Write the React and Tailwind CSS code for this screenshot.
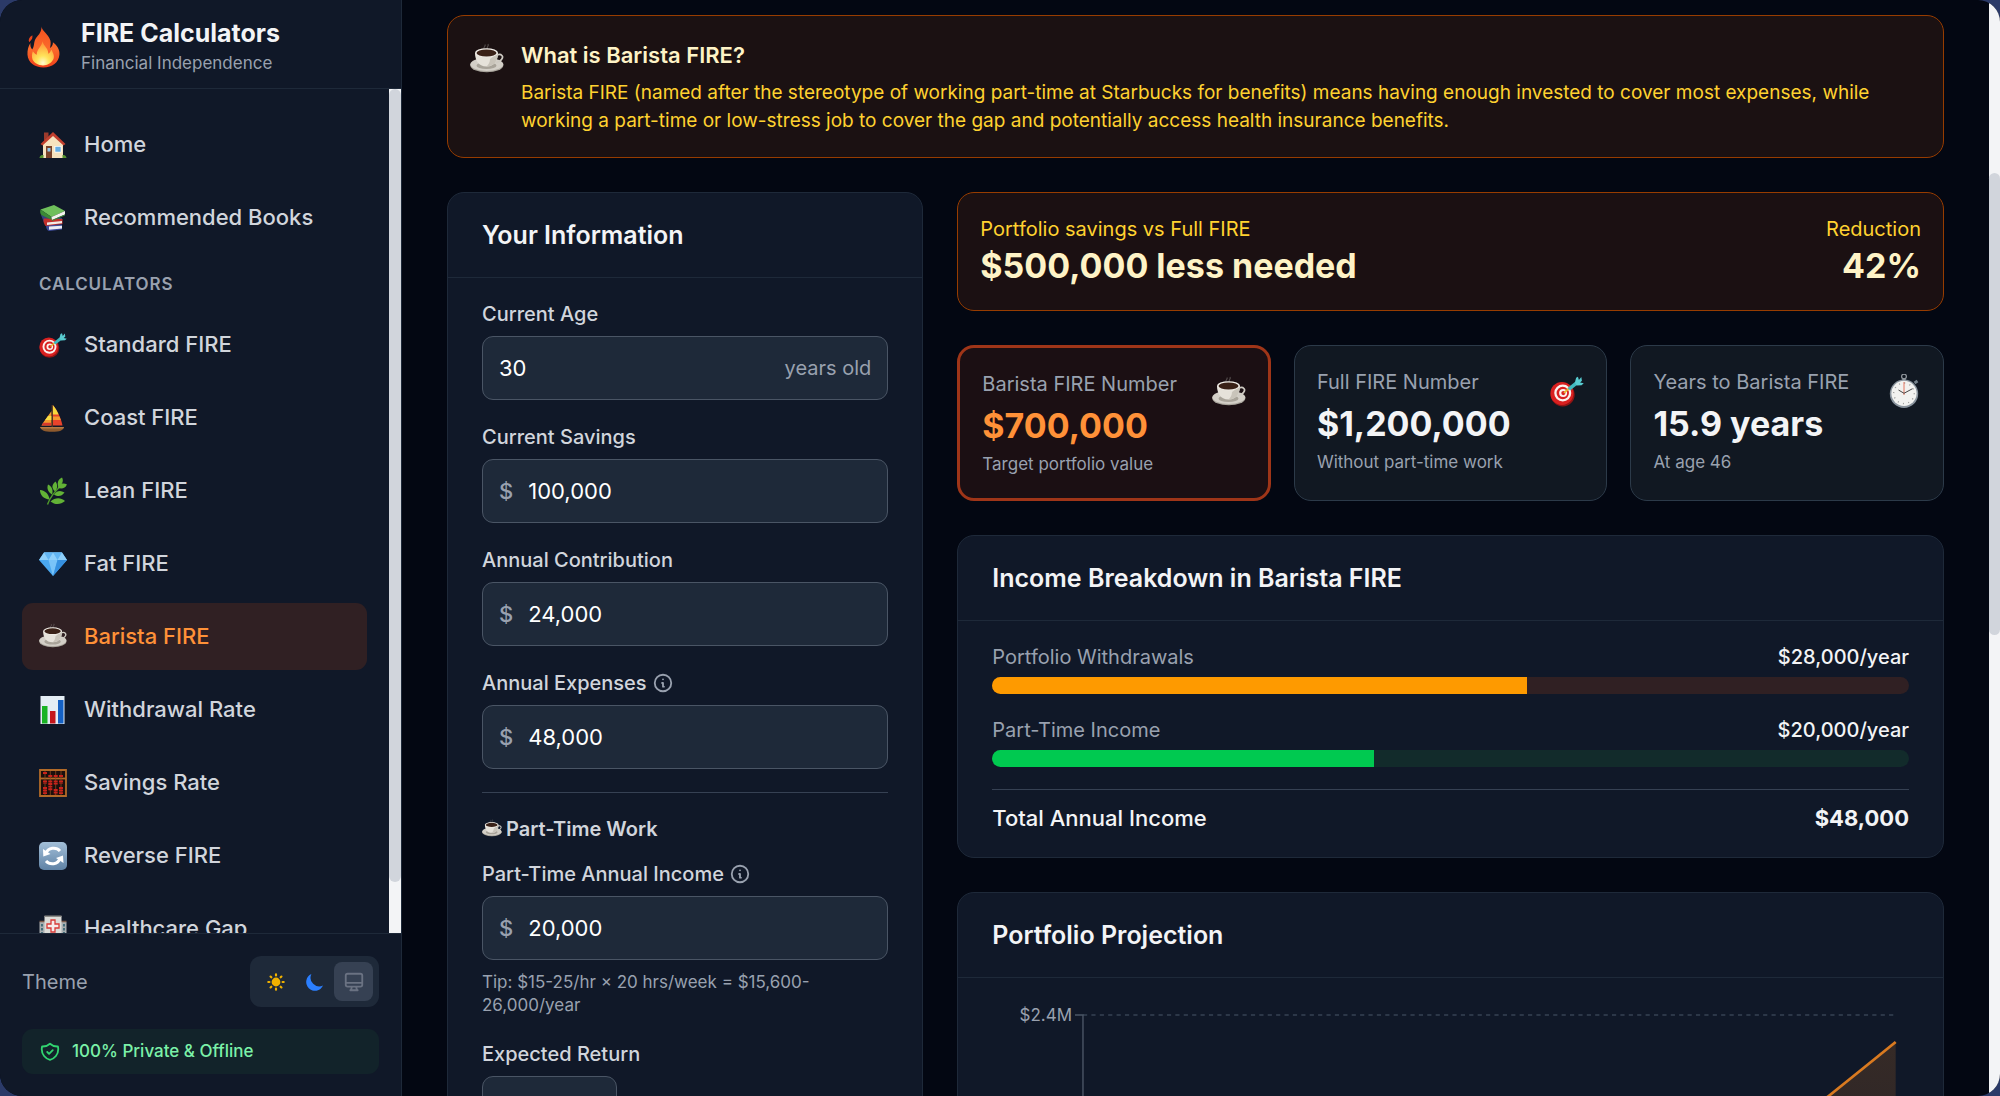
import React, { useState } from 'react'
import {
  HiSun,
  HiMoon,
  HiOutlineDesktopComputer,
  HiOutlineShieldCheck,
  HiOutlineInformationCircle,
} from 'react-icons/hi'

const Flame = ({ className }) => (
  <svg viewBox="0 0 34 42" className={className} aria-hidden="true">
    <defs>
      <linearGradient id="flameOuter" x1="0" y1="0" x2="0" y2="1">
        <stop offset="0" stopColor="#f4511e" />
        <stop offset="0.55" stopColor="#fb6a2c" />
        <stop offset="1" stopColor="#f0401a" />
      </linearGradient>
      <radialGradient id="flameInner" cx="0.5" cy="0.9" r="0.85">
        <stop offset="0" stopColor="#fffbd0" />
        <stop offset="0.35" stopColor="#ffe35a" />
        <stop offset="1" stopColor="#ff9236" />
      </radialGradient>
    </defs>
    <path d="M15 0C15 4 22 8 24 14c.8 3 .2 5.500-.3 8 2-1.500 3.200-3.500 3-6C31 19 34 24 33.400 29 32.700 37 26 42 17 42S1 37 .5 29C.2 24.500 1.500 20 3.500 17c-.2 3 .3 5 1.800 6.500C8 21 6.500 15 9.500 11.500 12.500 8.500 15 5 15 0z" fill="url(#flameOuter)" />
    <path d="M5.500 9c.5 2.500-.2 4.500-3.200 7C1 14 2 11 5.500 9z" fill="#e8431c" />
    <path d="M16 15c1 5 6 7 6 13 1.500-1 2.500-2.500 3-4.500 2.500 4.500 3.500 7 2 10.500-2 4-6 6-10.500 6s-9-2-10.800-6C4.700 31 5 28 6 25.500c1.500 2 2.500 3 4 3.500C10 23 15 21 16 15z" fill="url(#flameInner)" />
  </svg>
)

const House = ({ className }) => (
  <svg viewBox="0 0 28 28" className={className} aria-hidden="true">
    <path d="M5 1.500h4.500V8L5 10z" fill="#9c3a2c" />
    <path d="M4 12 14 4l10 8v15H4z" fill="#f6e3bf" />
    <path d="M14 1 1.500 13l2 1.500L14 5l10.500 9.500 2-1.500z" fill="#c2402f" />
    <path d="M7 15h6v12H7z" fill="#7a4229" />
    <path d="M8.500 17h3v3.500h-3z" fill="#8ec9ef" />
    <path d="M15.500 15h7v6.500h-7z" fill="#fff" />
    <path d="M16.300 15.800h5.400v5h-5.400z" fill="#68aee2" />
    <path d="M.5 27c0-2 1.500-3.500 4-3V27zM27.500 27c0-2-1.500-3.500-4-3V27z" fill="#56932f" />
  </svg>
)

const Books = ({ className }) => (
  <svg viewBox="0 0 28 28" className={className} aria-hidden="true">
    <path d="m7 20 16 .5v5L10 27c-3-1-3-5-3-7z" fill="#3e4c9c" />
    <path d="m10 22.500 13-.8v2.800L10 25.800z" fill="#eceef5" />
    <path d="m2 11 3 7.500 18-1V14z" fill="#35427f" />
    <path d="M5 14.500c-1 2-.5 5 1.500 7.500l17-2v-5z" fill="#c22f2b" />
    <path d="m8 18.500 15-1.500v2.300l-15 1.800z" fill="#f2ece6" />
    <path d="M1.500 5.500 15 1l11 6-13.500 6z" fill="#6fbf5b" />
    <path d="M1.500 5.500c-.7 2-.3 4 .8 5.500L13 16l-.5-3z" fill="#3b8a35" />
    <path d="M12.500 13 26 7v3.500L13 16z" fill="#f3f3ee" />
    <path d="M13 16 26 10.500v.9L13 17z" fill="#3b8a35" />
  </svg>
)

const Target = ({ className }) => (
  <svg viewBox="0 0 28 28" className={className} aria-hidden="true">
    <circle cx="10.500" cy="17" r="9.800" fill="#8f1414" />
    <circle cx="9.800" cy="16" r="9.500" fill="#d92020" />
    <circle cx="10.500" cy="15.700" r="7" fill="#fbf1ef" />
    <circle cx="10.500" cy="15.700" r="5.100" fill="#d92020" />
    <circle cx="10.800" cy="15.700" r="3.300" fill="#fbf1ef" />
    <circle cx="11" cy="15.700" r="1.700" fill="#d92020" />
    <path d="m11.500 15.500 4.500-4" stroke="#e8b62e" strokeWidth="1.500" />
    <path d="m14.500 11.500 6-5 2.500 2-6.500 5z" fill="#3fb9bf" />
    <path d="m20.500 7 1-4 1.500-.7.800 2.700 2-2.500.5 3-1.500 1.500 3 .7-1.800 1.500-4 .3z" fill="#58cbd0" />
  </svg>
)

const Sailboat = ({ className }) => (
  <svg viewBox="0 0 28 28" className={className} aria-hidden="true">
    <path d="M13.800 1C18 6 22 14 23.500 21.500H14z" fill="#e9432b" />
    <path d="M13.800 1c2.500 3 4.400 6 5.800 9.500h-5.800z" fill="#f7d93e" />
    <path d="M14 12.500h6.500l1.200 3.500H14z" fill="#f59a2f" />
    <path d="M12.500 7C9 12 5 17 2.500 21.500h10z" fill="#f29a2d" />
    <path d="M9 12h3.500v4H6.200z" fill="#f8dd45" />
    <path d="M4.200 18.700h8.300v2.800h-10z" fill="#d9382d" />
    <path d="M13.200 1v23" stroke="#6c4022" strokeWidth="1" />
    <path d="M1 23h24c-1 3.500-4 4.800-12 4.800S2.500 26.500 1 23z" fill="#8e5a2d" />
    <path d="M1 23h24l-.7 1.500H2z" fill="#b77a43" />
  </svg>
)

const Herb = ({ className }) => (
  <svg viewBox="0 0 28 28" className={className} aria-hidden="true">
    <path d="M8.500 27.500C11 20 17 13 24 7" fill="none" stroke="#4f9a2b" strokeWidth="1.400" />
    <g fill="#62b236">
      <path d="M23 .5c2 3.500 0 7.500-3.500 9.500C17.500 6 19.500 2 23 .5z" />
      <path d="M28 7.500c-2 4-5.500 5-9.500 3C21 6.500 24.500 5.500 28 7.500z" />
      <path d="M16.500 4.500c2.500 3.500 2 7-.5 10-3.500-3-3.500-7 .5-10z" />
      <path d="M9 7.500c4 2 5.500 6 4 10-4-2.500-5.500-6-4-10z" />
      <path d="M1 13c5.500.5 9 4.500 9.500 9.500C5 22 1 18.500 1 13z" />
      <path d="M25.500 15.500c-3 4-6.500 4.500-10.500 2 3-4 6.500-4.500 10.500-2z" />
      <path d="M26 24c-4.500 4-10 4-14.500.5 4.500-4 10-4.500 14.500-.5z" />
    </g>
  </svg>
)

const Gem = ({ className }) => (
  <svg viewBox="0 0 28 28" className={className} aria-hidden="true">
    <path d="M5 2.500h18l5 7.500-14 16L0 10z" fill="#4aa8f0" />
    <path d="M5 2.500h18l5 7.500H0z" fill="#8fd0fb" />
    <path d="m5 2.500 4.500 7.500L14 2.500 18.500 10 23 2.500z" fill="#62b5f3" />
    <path d="M9.500 10h9L14 26z" fill="#79c3f8" />
    <path d="M18.500 10H28L14 26z" fill="#3690e0" />
  </svg>
)

const Coffee = ({ className }) => (
  <svg viewBox="0 3 34 34" className={className} aria-hidden="true">
    <path d="M14 9c-1-2 2-2.500 1-4.500M17.500 9c-1.500-2.500 2-3 .5-5" fill="none" stroke="#77716f" strokeOpacity="0.6" strokeWidth="1.200" />
    <ellipse cx="16.800" cy="25.500" rx="16.500" ry="6.800" fill="#a9a59c" />
    <ellipse cx="16.800" cy="24.300" rx="16.500" ry="6.600" fill="#d3cfc7" />
    <ellipse cx="16.500" cy="25.500" rx="10" ry="3.600" fill="#a8a399" />
    <path d="M27 15c4.500-1.800 7 1.500 4.500 4.500-1.500 2-4 3-6.500 3" fill="none" stroke="#cfcbc3" strokeWidth="1.700" />
    <path d="M5 13c0 6.500 3 13.500 11.500 13.500S28 19.500 28 13z" fill="#e6e2da" />
    <path d="M20 19c0 3-1.500 6-3.500 7.500C25 26.500 28 19.500 28 13z" fill="#c9c4ba" />
    <ellipse cx="16.500" cy="12.800" rx="11.500" ry="4.500" fill="#f1eee8" />
    <ellipse cx="16.500" cy="13" rx="10" ry="3.500" fill="#3a2117" />
  </svg>
)

const Bars = ({ className }) => (
  <svg viewBox="0 0 28 28" className={className} aria-hidden="true">
    <path d="M1.500 0h24v28h-24z" fill="#e4edf5" />
    <path d="M3 10h5.500v17.500H3z" fill="#19b324" />
    <path d="M11 15h5.500v12.500H11z" fill="#c4161c" />
    <path d="M19 4h5.500v23.500H19z" fill="#1561c4" />
  </svg>
)

const Abacus = ({ className }) => (
  <svg viewBox="0 0 28 28" className={className} aria-hidden="true">
    <path d="M1 1h26v26H1z" fill="#1b0f0d" stroke="#b26a28" strokeWidth="1.800" />
    <path d="M1 9.500h26" stroke="#b26a28" strokeWidth="1.800" />
    <path d="M6 2v24M11.300 2v24M16.700 2v24M22 2v24" stroke="#8a4a22" strokeWidth="0.800" />
    <g stroke="#c9221b" strokeWidth="4">
      <path d="M6 3v2M11.300 6v2M16.700 6v2M22 6v2" />
      <path d="M6 11.500v3M6 18v7.500M11.300 11.500v10M16.700 11.500v4M16.700 20v5.500M22 11.500v3M22 18v7.500" strokeDasharray="1.900 .7" />
    </g>
  </svg>
)

const Cycle = ({ className }) => (
  <svg viewBox="0 0 28 28" className={className} aria-hidden="true">
    <defs>
      <linearGradient id="cycleBg" x1="0" y1="0" x2="0" y2="1">
        <stop offset="0" stopColor="#a3bfd8" />
        <stop offset="1" stopColor="#5f82a5" />
      </linearGradient>
    </defs>
    <rect width="28" height="28" rx="5" fill="url(#cycleBg)" />
    <path d="M7 11.500C9 5.500 17 4.500 21 9M21 16.500C19 22.500 11 23.500 7 19" fill="none" stroke="#fff" strokeWidth="3" />
    <path d="m4 7 .3 7.500L11.500 12zM24.500 21l-.5-7.500-7 2.500z" fill="#fff" />
  </svg>
)

const Hospital = ({ className }) => (
  <svg viewBox="0 0 28 28" className={className} aria-hidden="true">
    <path d="M.5 7H7v21H.5zM21 7h6.500v21H21z" fill="#a9aeb0" />
    <path d="M.5 5.800H7v1.500H.5zM21 5.800h6.500v1.500H21z" fill="#7b5b4b" />
    <path d="M3 9v18M25 9v18" stroke="#3a6876" strokeWidth="1.800" strokeDasharray="2.500 1.500" />
    <path d="M5.500 1h17v27h-17z" fill="#dcdcd8" />
    <path d="M5.500.5h17V2h-17z" fill="#8c8b87" />
    <path d="M12 5h4v4h4v4h-4v4h-4v-4H8V9h4z" fill="#f7eceb" stroke="#d73a37" strokeWidth="1.300" />
    <path d="M8.500 20h11v8h-11z" fill="#6f8f9c" />
  </svg>
)

const Stopwatch = ({ className }) => (
  <svg viewBox="0 0 34 34" className={className} aria-hidden="true">
    <circle cx="17" cy="2.600" r="2.400" fill="none" stroke="#8c9299" strokeWidth="1.300" />
    <path d="M15.300 4h3.400v3h-3.400z" fill="#8c9299" />
    <path d="m27.500 9 3-2" stroke="#74808a" strokeWidth="3" />
    <circle cx="17" cy="19.700" r="14.200" fill="#8a949e" />
    <circle cx="17" cy="19.300" r="12.600" fill="#f2f2f0" />
    <circle cx="17" cy="19.300" r="10.300" fill="none" stroke="#9b9b9b" strokeWidth="1.400" strokeDasharray="1 4.390" />
    <path d="M17 8V21" stroke="#e0573a" strokeWidth="0.800" />
    <path d="m11.500 16 5.500 3.300 8.500-4.600" fill="none" stroke="#333" strokeWidth="0.900" />
  </svg>
)

const mainLinks = [
  { name: 'Home', icon: House },
  { name: 'Recommended Books', icon: Books },
]

const calculators = [
  { name: 'Standard FIRE', icon: Target },
  { name: 'Coast FIRE', icon: Sailboat },
  { name: 'Lean FIRE', icon: Herb },
  { name: 'Fat FIRE', icon: Gem },
  { name: 'Barista FIRE', icon: Coffee, active: true },
  { name: 'Withdrawal Rate', icon: Bars },
  { name: 'Savings Rate', icon: Abacus },
  { name: 'Reverse FIRE', icon: Cycle },
  { name: 'Healthcare Gap', icon: Hospital },
]

const themes = [
  { id: 'light', label: 'Light theme', icon: HiSun, color: 'text-[#f0b100]' },
  { id: 'dark', label: 'Dark theme', icon: HiMoon, color: 'text-[#2b7fff]' },
  { id: 'system', label: 'System theme', icon: HiOutlineDesktopComputer, color: 'text-[#6a7282]' },
]

const NavLink = ({ item }) => {
  const Icon = item.icon
  return (
    <li>
      <a
        href="#"
        aria-current={item.active ? 'page' : undefined}
        className={`flex h-[67px] items-center gap-[17px] rounded-[11px] px-[17px] text-[22px] font-medium ${
          item.active ? 'bg-[#302023] text-[#ff9138]' : 'text-gray-300'
        }`}
      >
        <Icon className="size-7 shrink-0" />
        {item.name}
      </a>
    </li>
  )
}

const Sidebar = () => {
  const [theme, setTheme] = useState('system')

  return (
    <aside className="flex w-[402px] shrink-0 flex-col border-r border-gray-800 bg-gray-900">
      <div className="flex items-center gap-[21px] border-b border-gray-800 pt-4 pr-[22px] pb-[11px] pl-[27px]">
        <Flame className="h-[42px] w-[33px]" />
        <div>
          <h1 className="text-[25px] leading-[34px] font-bold text-gray-100">FIRE Calculators</h1>
          <p className="text-[17px] leading-[27px] text-gray-400">Financial Independence</p>
        </div>
      </div>

      <div className="flex min-h-0 flex-1">
        <nav className="flex-1 overflow-hidden p-[22px]">
          <ul className="flex flex-col gap-[6px]">
            {mainLinks.map((item) => (
              <NavLink key={item.name} item={item} />
            ))}
          </ul>
          <h2 className="px-[17px] pt-[22px] pb-[15px] text-[17px] leading-[23px] font-semibold tracking-wider text-gray-400">
            CALCULATORS
          </h2>
          <ul className="flex flex-col gap-[6px]">
            {calculators.map((item) => (
              <NavLink key={item.name} item={item} />
            ))}
          </ul>
        </nav>
        <div className="w-[12px] bg-gray-100" aria-hidden="true">
          <div className="h-[94%] rounded-full bg-gray-300" />
        </div>
      </div>

      <div className="border-t border-gray-800 p-[22px]">
        <div className="flex items-center justify-between">
          <span className="text-[20px] text-gray-400">Theme</span>
          <div className="flex rounded-[11px] bg-gray-800 p-[6px]">
            {themes.map((t) => {
              const Icon = t.icon
              return (
                <button
                  key={t.id}
                  aria-label={t.label}
                  onClick={() => setTheme(t.id)}
                  className={`flex size-[39px] items-center justify-center rounded-[8px] ${t.color} ${
                    theme === t.id ? 'bg-gray-700' : ''
                  }`}
                >
                  <Icon className="size-[22px]" />
                </button>
              )
            })}
          </div>
        </div>
        <div className="mt-[22px] flex h-[45px] items-center gap-[11px] rounded-[11px] bg-[#12232a] px-[17px] text-[17px] font-medium text-[#7bf1a8]">
          <HiOutlineShieldCheck className="size-[22px] text-[#31d470]" />
          100% Private &amp; Offline
        </div>
      </div>
    </aside>
  )
}

const Card = ({ title, children }) => (
  <section className="rounded-[17px] border border-gray-800 bg-gray-900">
    <h2 className="border-b border-gray-800 px-[34px] py-[25px] text-[25px] leading-[34px] font-semibold text-gray-100">
      {title}
    </h2>
    <div className="px-[34px] py-[22px]">{children}</div>
  </section>
)

const Field = ({ id, label, value, prefix, suffix, info }) => (
  <div>
    <div className="mb-2 flex items-center gap-[5px]">
      <label htmlFor={id} className="text-[20px] leading-[28px] font-medium whitespace-nowrap text-gray-300">
        {label}
      </label>
      {info && (
        <button type="button" aria-label={`About ${label}`} className="text-gray-400">
          <HiOutlineInformationCircle className="size-[22px]" />
        </button>
      )}
    </div>
    <div className="flex h-16 items-center rounded-[11px] border border-gray-600 bg-gray-800 px-4">
      {prefix && <span className="mr-[15px] text-[22px] font-medium text-gray-400">{prefix}</span>}
      <input
        id={id}
        type="text"
        defaultValue={value}
        className="w-full min-w-0 flex-1 bg-transparent text-[22px] text-white outline-none"
      />
      {suffix && <span className="text-[20px] whitespace-nowrap text-gray-400">{suffix}</span>}
    </div>
  </div>
)

const StatCard = ({ label, value, note, icon: Icon, highlight }) => (
  <div
    className={`flex items-start justify-between rounded-[17px] p-[22px] ${
      highlight ? 'border-3 border-[#9f3518] bg-[#1b0f13]' : 'border border-[#2c3a49] bg-[#111822]'
    }`}
  >
    <div>
      <p className="text-[20px] leading-[28px] text-gray-400">{label}</p>
      <p className={`mt-[5px] text-[34px] leading-[45px] font-bold ${highlight ? 'text-[#ff9138]' : 'text-gray-100'}`}>
        {value}
      </p>
      <p className="mt-[5px] text-[17px] leading-[23px] text-gray-400">{note}</p>
    </div>
    <Icon className="mt-[6px] size-[34px] shrink-0" />
  </div>
)

const IncomeRow = ({ label, amount, percent, track, fill }) => (
  <div>
    <div className="mb-[6px] flex justify-between text-[20px] leading-[28px]">
      <span className="text-gray-400">{label}</span>
      <span className="font-medium text-gray-100">{amount}</span>
    </div>
    <div className={`h-[17px] overflow-hidden rounded-full ${track}`}>
      <div className={`h-full ${fill}`} style={{ width: `${percent}%` }} />
    </div>
  </div>
)

const ProjectionChart = () => (
  <svg viewBox="0 0 917 420" className="w-full" role="img" aria-label="Portfolio projection">
    <defs>
      <linearGradient id="area" x1="0" y1="0" x2="0" y2="1">
        <stop offset="0" stopColor="#e17d20" stopOpacity="0.180" />
        <stop offset="1" stopColor="#e17d20" stopOpacity="0.050" />
      </linearGradient>
    </defs>
    <path d="M91 15H902" stroke="#364153" strokeWidth="1.400" strokeDasharray="4.200 4.200" />
    <path d="M83 15h8v400" fill="none" stroke="#4a5565" strokeWidth="1.400" />
    <text x="80" y="21" textAnchor="end" fontSize="17" fill="#99a1af">
      $2.4M
    </text>
    <path d="M91 398C420 370 690 215 837 96Q872 68 904 42V415H91z" fill="url(#area)" />
    <path d="M91 398C420 370 690 215 837 96Q872 68 904 42" fill="none" stroke="#d97a20" strokeWidth="2.800" />
  </svg>
)

const App = () => {
  return (
    <div className="h-screen bg-[#2b3a68] font-['Inter',sans-serif]">
      <div className="flex h-full overflow-hidden rounded-[22px] bg-gray-950">
        <Sidebar />

        <main className="min-w-0 flex-1 overflow-hidden px-[45px] pt-[15px]">
          <section className="flex gap-[17px] rounded-[17px] border border-[#973c00] bg-[#1b1112] p-[22px]">
            <Coffee className="mt-[5px] size-[34px] shrink-0" />
            <div>
              <h2 className="text-[22px] leading-[34px] font-semibold text-[#fef3c6]">What is Barista FIRE?</h2>
              <p className="mt-[7px] text-[19px] leading-[28px] text-[#ffd230]">
                Barista FIRE (named after the stereotype of working part-time at Starbucks for benefits) means having
                enough invested to cover most expenses, while working a part-time or low-stress job to cover the gap and
                potentially access health insurance benefits.
              </p>
            </div>
          </section>

          <div className="mt-[34px] grid grid-cols-3 gap-[34px]">
            <Card title="Your Information">
              <form className="flex flex-col gap-[23px]">
                <Field id="age" label="Current Age" value="30" suffix="years old" />
                <Field id="savings" label="Current Savings" value="100,000" prefix="$" />
                <Field id="contribution" label="Annual Contribution" value="24,000" prefix="$" />
                <Field id="expenses" label="Annual Expenses" value="48,000" prefix="$" info />
                <div className="border-t border-gray-700 pt-[22px]">
                  <h3 className="mb-[17px] flex items-center gap-1 text-[20px] leading-[28px] font-semibold text-gray-300">
                    <Coffee className="size-5" />
                    Part-Time Work
                  </h3>
                  <Field id="partTime" label="Part-Time Annual Income" value="20,000" prefix="$" info />
                  <p className="mt-[11px] text-[17px] leading-[23px] text-gray-400">
                    Tip: $15-25/hr × 20 hrs/week = $15,600-26,000/year
                  </p>
                </div>
                <div className="w-1/3">
                  <Field id="return" label="Expected Return" value="" />
                </div>
              </form>
            </Card>

            <div className="col-span-2 flex flex-col gap-[34px]">
              <section className="flex justify-between rounded-[17px] border border-[#973c00] bg-[#1b1012] p-[22px]">
                <div>
                  <p className="text-[20px] leading-[28px] text-[#ffd230]">Portfolio savings vs Full FIRE</p>
                  <p className="text-[34px] leading-[45px] font-bold text-[#fef3c6]">$500,000 less needed</p>
                </div>
                <div className="text-right">
                  <p className="text-[20px] leading-[28px] text-[#ffd230]">Reduction</p>
                  <p className="text-[34px] leading-[45px] font-bold text-[#fef3c6]">42%</p>
                </div>
              </section>

              <div className="grid grid-cols-3 gap-[23px]">
                <StatCard
                  label="Barista FIRE Number"
                  value="$700,000"
                  note="Target portfolio value"
                  icon={Coffee}
                  highlight
                />
                <StatCard label="Full FIRE Number" value="$1,200,000" note="Without part-time work" icon={Target} />
                <StatCard label="Years to Barista FIRE" value="15.9 years" note="At age 46" icon={Stopwatch} />
              </div>

              <Card title="Income Breakdown in Barista FIRE">
                <div className="flex flex-col gap-[22px]">
                  <IncomeRow
                    label="Portfolio Withdrawals"
                    amount="$28,000/year"
                    percent={(28 / 48) * 100}
                    track="bg-[#302023]"
                    fill="bg-[#fe9a00]"
                  />
                  <IncomeRow
                    label="Part-Time Income"
                    amount="$20,000/year"
                    percent={(20 / 48) * 100}
                    track="bg-[#122b2b]"
                    fill="bg-[#00c950]"
                  />
                  <div className="flex justify-between border-t border-gray-700 pt-[11px] text-[22px] leading-[34px] text-gray-100">
                    <span className="font-medium">Total Annual Income</span>
                    <span className="font-bold">$48,000</span>
                  </div>
                </div>
              </Card>

              <Card title="Portfolio Projection">
                <ProjectionChart />
              </Card>
            </div>
          </div>
        </main>

        <div className="flex w-[11px] flex-col bg-gray-100 pt-[173px]" aria-hidden="true">
          <div className="h-1/2 rounded-full bg-gray-300" />
        </div>
      </div>
    </div>
  )
}

export default App
